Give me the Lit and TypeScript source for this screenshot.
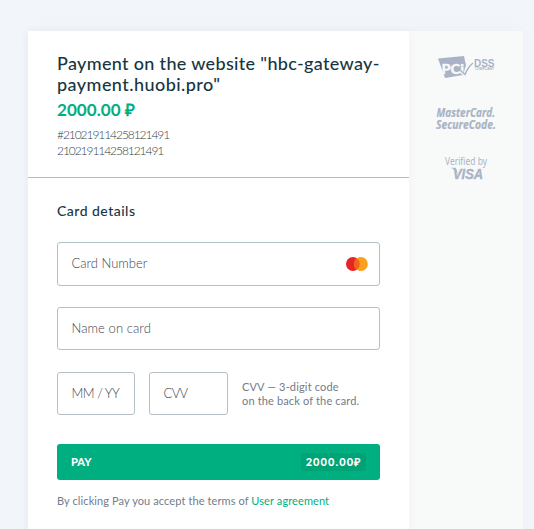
import { LitElement, html, css } from "lit";
import { customElement } from "lit/decorators.js";

const pciLogo = html`<svg class="pci" width="58" height="23" viewBox="0 0 58 23" aria-label="PCI DSS">
  <path d="M0 2.500 L26 0 L27 5 L28 9 L25 19 L7 22 Z" fill="#a9b3c5" />
  <text x="3.500" y="17.500" textLength="22.500" lengthAdjust="spacingAndGlyphs" class="pci-text">PCi</text>
  <path d="M22 15 L27 19 Q30 11 34 8" fill="none" stroke="#f8faf9" stroke-width="2.500" />
  <path d="M22.500 14.500 L27 18.500 Q30 11 35 7" fill="none" stroke="#a9b3c5" stroke-width="1.500" />
  <text x="36" y="10.500" textLength="20.500" lengthAdjust="spacingAndGlyphs" class="dss-text">DSS</text>
  <text x="37" y="13.500" textLength="19" lengthAdjust="spacingAndGlyphs" class="dss-note">COMPLIANT</text>
</svg>`;

const secureCodeLogo = html`<svg class="secure" width="62" height="25" viewBox="0 0 62 25" aria-label="MasterCard SecureCode">
  <text x="0.500" y="10.800" textLength="58.500" lengthAdjust="spacingAndGlyphs" class="secure-text">MasterCard.</text>
  <text x="0" y="22.800" textLength="60" lengthAdjust="spacingAndGlyphs" class="secure-text">SecureCode.</text>
</svg>`;

const visaLogo = html`<svg class="visa" width="44" height="24" viewBox="0 0 44 24" aria-label="Verified by Visa">
  <text x="0" y="9" textLength="42" lengthAdjust="spacingAndGlyphs" class="verified-text">Verified by</text>
  <path d="M5.500 11.800 H10.500 L13 18 Q9.500 13 5.500 11.800 Z" fill="#a9b3c5" />
  <text x="8" y="22.500" textLength="30" lengthAdjust="spacingAndGlyphs" class="visa-text">VISA</text>
</svg>`;

const mastercard = html`<svg class="brand" width="23" height="14" viewBox="0 0 23 14" aria-label="Mastercard">
  <circle cx="7.900" cy="7" r="6.900" fill="#e52528" />
  <circle cx="15.900" cy="7" r="6.900" fill="#faa01e" />
  <path d="M11.900 1.400 A6.900 6.900 0 0 1 11.900 12.600 A6.900 6.900 0 0 1 11.900 1.400 Z" fill="#f0641f" />
</svg>`;

@customElement("app-root")
export class AppRoot extends LitElement {
  static styles = css`
    :host {
      display: block;
      height: 529px;
      overflow: hidden;
      background: #f2f6fa;
      font-family: Lato, "Open Sans", sans-serif;
      font-weight: 300;
      color: #3d4853;
    }
    * { box-sizing: border-box; }
    .page { display: flex; padding: 31px 11px 0 28px; height: 529px; }
    .shell {
      display: flex;
      width: 495px;
      height: 520px;
      background: #f8faf9;
      box-shadow: 0 0 14px rgba(30, 60, 90, 0.03);
    }
    .card { width: 381px; background: #fff; box-shadow: 0 0 10px rgba(0, 0, 0, 0.035); white-space: nowrap; }
    .head { height: 147px; padding: 22px 29px 0; border-bottom: 1px solid #b0bfc1; }
    h1 { margin: 0; font-size: 18px; line-height: 21px; font-weight: 500; color: #17363f; }
    .site-a, .site-b { display: block; }
    .site-a { letter-spacing: 0.33px; }
    .site-b { letter-spacing: 0.45px; }
    .sum { margin-top: 3px; font-size: 17px; line-height: 24px; font-weight: 700; color: #00ae7e; letter-spacing: 0.05px; }
    .id { font-size: 12px; line-height: 16px; letter-spacing: -1.06px; color: #333e49; }
    .ids { margin-top: 5px; }
    form { margin: 0; padding: 0 29px; }
    h2 { margin: 23px 0 0; font-size: 14px; line-height: 20px; height: 41px; font-weight: 500; color: #17363f; letter-spacing: 0.48px; }
    .field {
      display: flex;
      align-items: center;
      justify-content: space-between;
      height: 43px;
      padding: 0 11px 2px 13.5px;
      border: 1px solid #b5c0c6;
      border-radius: 3px;
      font-size: 13px;
    }
    .number { height: 44px; padding-bottom: 3px; border-color: #adc2c4; }
    .brand { display: block; margin-top: 2px; }
    .name { margin-top: 21px; letter-spacing: 0.08px; }
    .row { display: flex; margin-top: 22px; }
    .expiry { width: 78px; letter-spacing: -0.5px; }
    .cvv { width: 79px; margin-left: 14px; letter-spacing: -0.6px; }
    .hint { margin: 8px 0 0 14px; font-size: 11px; font-weight: 400; line-height: 14px; letter-spacing: 0.15px; color: #727c8a; }
    .hint span { display: block; }
    .pay {
      display: flex;
      align-items: center;
      justify-content: space-between;
      width: 100%;
      height: 36px;
      margin: 29px 0 0;
      padding: 0 14px;
      border: 0;
      border-radius: 3px;
      background: #00af80;
      color: #fff;
      font: 900 11px/18px Lato, sans-serif;
    }
    .amount { width: 65px; height: 18px; line-height: 17px; border-radius: 2px; background: #00a376; text-align: center; letter-spacing: 1.1px; }
    .terms { margin-top: 13px; font-size: 11px; font-weight: 400; line-height: 16px; letter-spacing: 0.1px; color: #727c8a; }
    .terms a { color: #00ae7e; text-decoration: none; }
    .logos { width: 114px; display: flex; flex-direction: column; align-items: center; padding: 25px 0 0 1px; }
    .logos svg { display: block; overflow: visible; fill: #a9b3c5; }
    .secure { margin-top: 27px; }
    .visa { margin-top: 25px; }
    .logos .pci-text { font: 900 14px Lato, sans-serif; fill: #f8faf9; stroke: #f8faf9; stroke-width: 0.3px; }
    .dss-text { font: 700 10px "Liberation Sans", sans-serif; }
    .dss-note { font: 700 3px "Liberation Sans", sans-serif; }
    .secure-text { font: italic 700 12px "Open Sans", sans-serif; stroke: #a9b3c5; stroke-width: 0.2px; }
    .verified-text { font: 400 10px "Noto Sans", sans-serif; }
    .visa-text { font: italic 700 14.5px "Liberation Sans", sans-serif; stroke: #a9b3c5; stroke-width: 0.4px; }
  `;

  render() {
    return html`<main class="page">
      <div class="shell">
        <section class="card">
          <header class="head">
            <h1><span class="site-a">Payment on the website "hbc-gateway-</span><span class="site-b">payment.huobi.pro"</span></h1>
            <div class="sum">2000.00 ₽</div>
            <div class="ids">
              <div class="id">#210219114258121491</div>
              <div class="id">210219114258121491</div>
            </div>
          </header>
          <form>
            <h2>Card details</h2>
            <div class="field number"><span>Card Number</span>${mastercard}</div>
            <div class="field name"><span>Name on card</span></div>
            <div class="row">
              <div class="field expiry"><span>MM / YY</span></div>
              <div class="field cvv"><span>CVV</span></div>
              <div class="hint"><span>CVV — 3-digit code</span><span>on the back of the card.</span></div>
            </div>
            <button class="pay" type="button"><span>PAY</span><span class="amount">2000.00₽</span></button>
            <div class="terms">By clicking Pay you accept the terms of <a>User agreement</a></div>
          </form>
        </section>
        <aside class="logos">${pciLogo}${secureCodeLogo}${visaLogo}</aside>
      </div>
    </main>`;
  }
}
